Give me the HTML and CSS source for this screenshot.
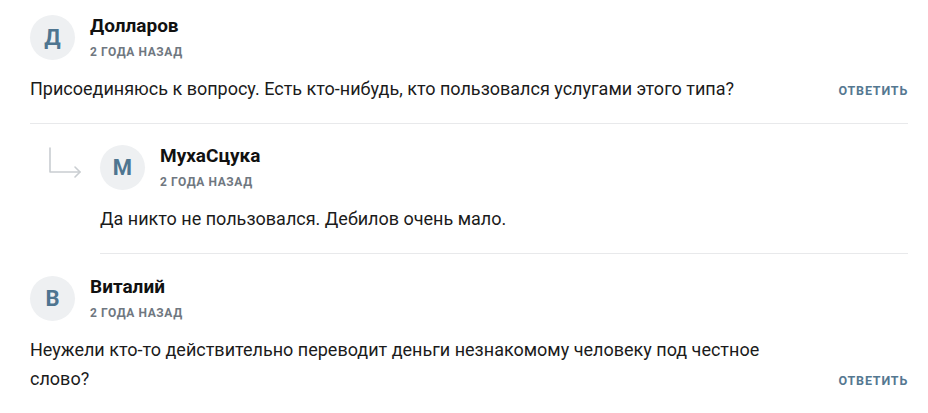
FILE: index.html
```html
<!DOCTYPE html>
<html lang="ru">
<head>
<meta charset="utf-8">
<link rel="stylesheet" href="styles.css">
</head>
<body>
<div class="comments">
  <div class="comment">
    <div class="head">
      <div class="avatar">Д</div>
      <div class="meta">
        <div class="name">Долларов</div>
        <div class="date">2 года назад</div>
      </div>
    </div>
    <div class="body">
      <p class="text">Присоединяюсь к вопросу. Есть кто-нибудь, кто пользовался услугами этого типа?</p>
      <span class="reply-btn">Ответить</span>
    </div>
  </div>
  <div class="reply">
    <svg class="reply-icon" width="34" height="34" viewBox="0 0 34 34" fill="none" stroke="#c9cdd1" stroke-width="1.6" stroke-linecap="round" stroke-linejoin="round">
      <path d="M2 2 V26 H32"/>
      <path d="M27 21 L32 26 L27 31"/>
    </svg>
    <div class="reply-main">
      <div class="comment nested">
        <div class="head">
          <div class="avatar">М</div>
          <div class="meta">
            <div class="name">МухаСцука</div>
            <div class="date">2 года назад</div>
          </div>
        </div>
        <div class="body">
          <p class="text">Да никто не пользовался. Дебилов очень мало.</p>
        </div>
      </div>
    </div>
  </div>
  <div class="comment last">
    <div class="head">
      <div class="avatar">В</div>
      <div class="meta">
        <div class="name">Виталий</div>
        <div class="date">2 года назад</div>
      </div>
    </div>
    <div class="body">
      <p class="text">Неужели кто-то действительно переводит деньги незнакомому человеку под честное слово?</p>
      <span class="reply-btn">Ответить</span>
    </div>
  </div>
</div>
</body>
</html>
```
FILE: styles.css
```css
* { box-sizing: border-box; }
html, body { margin: 0; padding: 0; background: #fff; }
body {
  font-family: Roboto, "Liberation Sans", Arial, sans-serif;
  color: #1b1b1b;
}
.comments {
  padding: 15px 20px 0 30px;
  width: 928px;
}
.comment {
  padding-bottom: 18px;
  border-bottom: 1px solid #e8e9eb;
}
.comment.last { border-bottom: none; padding-top: 22px; }
.head {
  display: flex;
  align-items: center;
  gap: 15px;
}
.avatar {
  width: 45px;
  height: 45px;
  border-radius: 50%;
  background: #eef0f2;
  color: #4e7590;
  font-weight: 700;
  font-size: 22px;
  display: flex;
  align-items: center;
  justify-content: center;
  flex: none;
}
.meta {
  display: flex;
  flex-direction: column;
  gap: 8px;
  margin-top: -2px;
}
.name {
  font-size: 19px;
  font-weight: 700;
  color: #111;
  line-height: 22px;
}
.date {
  font-size: 12px;
  font-weight: 700;
  text-transform: uppercase;
  letter-spacing: 0.6px;
  color: #6f7780;
  line-height: 14px;
}
.body {
  display: flex;
  align-items: last baseline;
  justify-content: space-between;
  margin-top: 14px;
}
.text {
  margin: 0;
  font-size: 18px;
  line-height: 29px;
  max-width: 760px;
}
.reply-btn {
  font-size: 12.5px;
  font-weight: 700;
  text-transform: uppercase;
  letter-spacing: 0.8px;
  color: #557891;
  line-height: 29px;
  flex: none;
}
.reply {
  display: flex;
  padding-top: 21px;
}
.reply-icon {
  flex: none;
  margin-left: 18px;
  margin-top: 1px;
  width: 34px;
  height: 34px;
}
.reply-main {
  flex: 1;
  margin-left: 18px;
}
.comment.nested {
  padding-bottom: 20px;
}
```
